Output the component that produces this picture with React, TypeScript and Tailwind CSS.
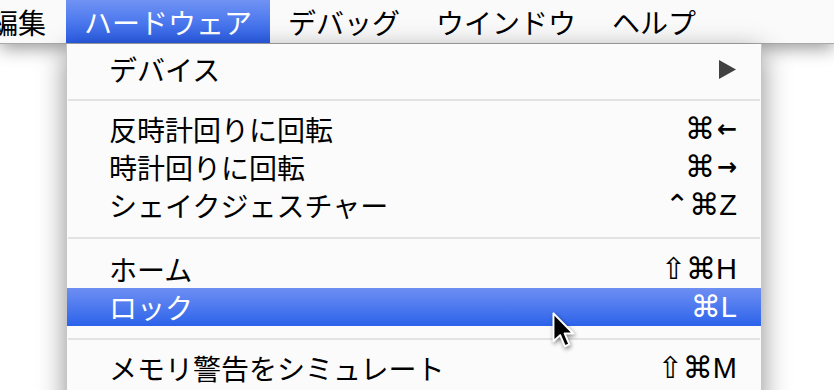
import React from "react";

type Row =
  | { kind: "item"; label: string; shortcut?: string; submenu?: boolean; active?: boolean }
  | { kind: "sep"; cls: string };

const jp = "'Noto Sans CJK JP', 'Liberation Sans', sans-serif";
const keys = "'Liberation Sans', 'DejaVu Sans', 'Noto Sans CJK JP', sans-serif";

const rows: Row[] = [
  { kind: "item", label: "デバイス", submenu: true },
  { kind: "sep", cls: "mt-[11px] mb-[9px]" },
  { kind: "item", label: "反時計回りに回転", shortcut: "⌘←" },
  { kind: "item", label: "時計回りに回転", shortcut: "⌘→" },
  { kind: "item", label: "シェイクジェスチャー", shortcut: "⌃⌘Z" },
  { kind: "sep", cls: "mt-[13px] mb-[11px]" },
  { kind: "item", label: "ホーム", shortcut: "⇧⌘H" },
  { kind: "item", label: "ロック", shortcut: "⌘L", active: true },
  { kind: "sep", cls: "mt-[12px] mb-[9px]" },
  { kind: "item", label: "メモリ警告をシミュレート", shortcut: "⇧⌘M" },
];

const menus = ["デバッグ", "ウインドウ", "ヘルプ"];

// arrows look heavier in the original, give them their own font
function Keys({ text }: { text: string }) {
  return (
    <span className="flex items-center whitespace-nowrap text-[29px]" style={{ fontFamily: keys }}>
      {text.split("").map((ch, i) =>
        ch === "←" || ch === "→" ? (
          <span key={i} className="ml-[2px] text-[24px] font-bold" style={{ fontFamily: "'DejaVu Sans', sans-serif" }}>
            {ch}
          </span>
        ) : ch === "⌘" || ch === "⇧" ? (
          <span key={i} className="text-[30px]">{ch}</span>
        ) : (
          <span key={i}>{ch}</span>
        )
      )}
    </span>
  );
}

export default function App() {
  return (
    <div className="relative h-[390px] w-[834px] overflow-hidden bg-white" style={{ fontFamily: jp }}>
      {/* menu bar */}
      <div className="relative z-10 flex h-[44px] border-b border-[#a9a9a9] bg-[#fafafa] text-[28px] leading-none text-black shadow-[0_4px_18px_rgba(0,0,0,0.42)]">
        <div className="flex w-[66px] shrink-0 items-center justify-end overflow-hidden pr-[20px]">
          <span className="whitespace-nowrap">編集</span>
        </div>
        <div className="flex items-center bg-gradient-to-b from-[#7093f3] to-[#2a5de8] px-[18px] text-white">ハードウェア</div>
        {menus.map(m => (
          <div key={m} className="flex items-center px-[18px] whitespace-nowrap">{m}</div>
        ))}
      </div>

      {/* dropdown */}
      <div className="absolute left-[66px] top-[44px] z-20 w-[696px] border-x border-[#c6c6c6] bg-[#fbfbfb] pt-[6px] pb-[20px] shadow-[0_8px_26px_rgba(0,0,0,0.45)]">
        {rows.map((r, i) =>
          r.kind === "sep" ? (
            <div key={i} className={`mx-[1px] h-[2px] bg-[#e3e3e3] ${r.cls}`}></div>
          ) : (
            <div
              key={i}
              className={`flex h-[38px] items-center justify-between pl-[42px] pr-[24px] text-[28px] leading-none ${
                r.active ? "bg-gradient-to-b from-[#6d8ef2] to-[#2b62ea] text-white" : "text-black"
              }`}
            >
              <span className="whitespace-nowrap">{r.label}</span>
              {r.submenu && (
                <svg width="17" height="19" viewBox="0 0 17 19" className="mr-[1px]">
                  <path d="M0 0 L17 9.5 L0 19 Z" fill="#414141" />
                </svg>
              )}
              {r.shortcut && <Keys text={r.shortcut} />}
            </div>
          )
        )}
      </div>

      {/* pointer */}
      <svg
        width="28"
        height="39"
        viewBox="0 0 20 28"
        className="absolute left-[552px] top-[312px] z-30 drop-shadow-[1px_2px_2px_rgba(0,0,0,0.45)]"
      >
        <path d="M1 1 L1 21 L5.8 16.6 L9.2 24.6 L12.4 23.2 L9 15.4 L15.2 15.4 Z" fill="#000" stroke="#fff" strokeWidth="1.4" strokeLinejoin="round" />
      </svg>
    </div>
  );
}
